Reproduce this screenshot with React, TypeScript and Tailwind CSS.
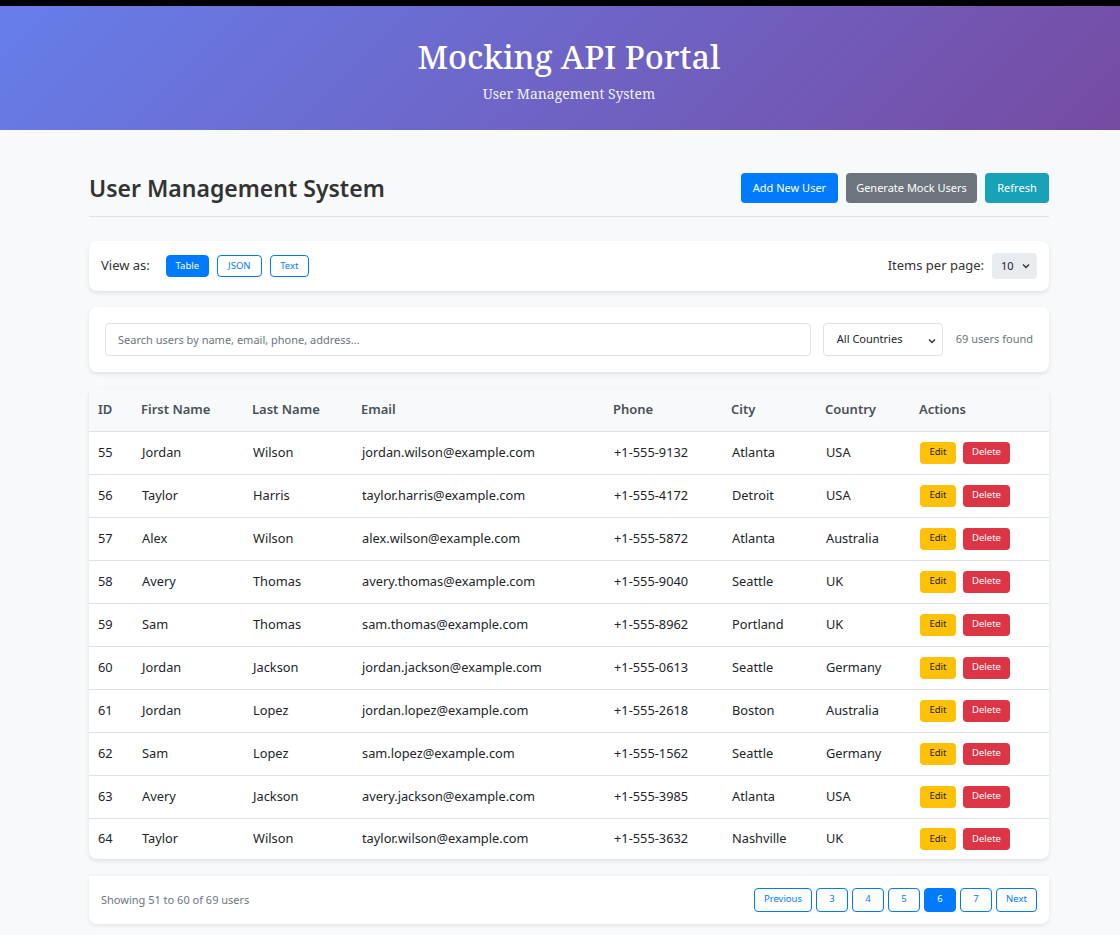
import React, { useState } from 'react';

interface User {
  id: number;
  firstName: string;
  lastName: string;
  email: string;
  phone: string;
  city: string;
  country: string;
}

const users: User[] = [
  { id: 55, firstName: 'Jordan', lastName: 'Wilson', email: 'jordan.wilson@example.com', phone: '+1-555-9132', city: 'Atlanta', country: 'USA' },
  { id: 56, firstName: 'Taylor', lastName: 'Harris', email: 'taylor.harris@example.com', phone: '+1-555-4172', city: 'Detroit', country: 'USA' },
  { id: 57, firstName: 'Alex', lastName: 'Wilson', email: 'alex.wilson@example.com', phone: '+1-555-5872', city: 'Atlanta', country: 'Australia' },
  { id: 58, firstName: 'Avery', lastName: 'Thomas', email: 'avery.thomas@example.com', phone: '+1-555-9040', city: 'Seattle', country: 'UK' },
  { id: 59, firstName: 'Sam', lastName: 'Thomas', email: 'sam.thomas@example.com', phone: '+1-555-8962', city: 'Portland', country: 'UK' },
  { id: 60, firstName: 'Jordan', lastName: 'Jackson', email: 'jordan.jackson@example.com', phone: '+1-555-0613', city: 'Seattle', country: 'Germany' },
  { id: 61, firstName: 'Jordan', lastName: 'Lopez', email: 'jordan.lopez@example.com', phone: '+1-555-2618', city: 'Boston', country: 'Australia' },
  { id: 62, firstName: 'Sam', lastName: 'Lopez', email: 'sam.lopez@example.com', phone: '+1-555-1562', city: 'Seattle', country: 'Germany' },
  { id: 63, firstName: 'Avery', lastName: 'Jackson', email: 'avery.jackson@example.com', phone: '+1-555-3985', city: 'Atlanta', country: 'USA' },
  { id: 64, firstName: 'Taylor', lastName: 'Wilson', email: 'taylor.wilson@example.com', phone: '+1-555-3632', city: 'Nashville', country: 'UK' },
];

const columns = [
  { label: 'ID', width: 'w-[43px]' },
  { label: 'First Name', width: 'w-[111px]' },
  { label: 'Last Name', width: 'w-[109px]' },
  { label: 'Email', width: 'w-[252px]' },
  { label: 'Phone', width: 'w-[118px]' },
  { label: 'City', width: 'w-[94px]' },
  { label: 'Country', width: 'w-[94px]' },
  { label: 'Actions', width: 'w-[139px]' },
];

const App: React.FC = () => {
  const [view, setView] = useState('Table');
  const pages = [3, 4, 5, 6, 7];

  return (
    <div className="min-h-[935px] bg-[#f8f9fa] font-['Noto_Sans',sans-serif] text-[#212529]">
      {/* Top strip */}
      <div className="h-[6px] bg-black" />

      {/* Header */}
      <header className="bg-[linear-gradient(135deg,#667eea_0%,#764ba2_100%)] pl-[18px] h-[124px] flex flex-col items-center text-white">
        <h1 className="mt-[30px] text-[32.5px] leading-[41px] font-['Noto_Serif','DejaVu_Serif',serif] font-medium">
          Mocking API Portal
        </h1>
        <p className="mt-[8px] text-[14px] leading-[18px] opacity-90 font-['Noto_Serif','DejaVu_Serif',serif]">
          User Management System
        </p>
      </header>

      <main className="pl-[18px]">
        <div className="mx-auto w-[960px] pt-[43px] pb-[11px]">
          {/* Title row */}
          <div className="flex items-center justify-between pb-[13px] border-b border-[#dee2e6]">
            <h2 className="text-[23px] leading-[30px] font-semibold text-[#333]">User Management System</h2>
            <div className="flex gap-2">
              <button className="h-[30px] w-[97px] rounded text-[11px] text-white bg-[#007bff]">Add New User</button>
              <button className="h-[30px] w-[131px] rounded text-[11px] text-white bg-[#6c757d]">Generate Mock Users</button>
              <button className="h-[30px] w-[64px] rounded text-[11px] text-white bg-[#17a2b8]">Refresh</button>
            </div>
          </div>

          {/* View toolbar */}
          <div className="mt-[24px] h-[50px] bg-white rounded-lg shadow-[0_2px_4px_rgba(0,0,0,0.1)] px-3 flex items-center justify-between">
            <div className="flex items-center">
              <span className="text-[13px] text-[#333] mr-[16px]">View as:</span>
              <div className="flex gap-2">
                {[
                  { v: 'Table', w: 'w-[43px]' },
                  { v: 'JSON', w: 'w-[45px]' },
                  { v: 'Text', w: 'w-[39px]' },
                ].map(({ v, w }) => (
                  <button
                    key={v}
                    onClick={() => setView(v)}
                    className={`h-[22px] ${w} rounded text-[9.5px] border ${
                      view === v
                        ? 'bg-[#007bff] border-[#007bff] text-white'
                        : 'bg-white border-[#007bff] text-[#007bff]'
                    }`}
                  >
                    {v}
                  </button>
                ))}
              </div>
            </div>
            <div className="flex items-center">
              <span className="text-[13px] text-[#333] mr-2">Items per page:</span>
              <div className="relative">
                <div className="h-[26px] w-[45px] rounded bg-[#e9ecef] text-[11px] flex items-center pl-[9px]">10</div>
                <svg className="absolute right-[7px] top-[10px]" width="8" height="6" viewBox="0 0 8 6">
                  <path d="M1 1.5 L4 4.5 L7 1.5" stroke="#333" strokeWidth="1.4" fill="none" />
                </svg>
              </div>
            </div>
          </div>

          {/* Search toolbar */}
          <div className="mt-4 h-[65px] bg-white rounded-lg shadow-[0_2px_4px_rgba(0,0,0,0.1)] px-4 flex items-center gap-3">
            <input
              className="flex-1 h-[33px] border border-[#dee2e6] rounded px-3 text-[11px] placeholder:text-[#6c757d] outline-none"
              placeholder="Search users by name, email, phone, address..."
            />
            <div className="relative w-[120px] h-[33px] border border-[#dee2e6] rounded bg-white text-[11px] flex items-center pl-[13px]">
              All Countries
              <svg className="absolute right-[6px] top-[14px]" width="8" height="6" viewBox="0 0 8 6">
                <path d="M1 1.5 L4 4.5 L7 1.5" stroke="#333" strokeWidth="1.4" fill="none" />
              </svg>
            </div>
            <span className="text-[11px] text-[#6c757d] pl-px">69 users found</span>
          </div>

          {/* Table */}
          <div className="mt-4 bg-white rounded-lg shadow-[0_2px_4px_rgba(0,0,0,0.1)] overflow-hidden">
            <table className="w-full border-collapse text-left">
              <thead>
                <tr className="bg-[#f8f9fa] h-[43px] border-b border-[#dee2e6]">
                  {columns.map((c) => (
                    <th key={c.label} className={`${c.width} pl-[9px] text-[13px] font-semibold text-[#495057]`}>
                      {c.label}
                    </th>
                  ))}
                </tr>
              </thead>
              <tbody>
                {users.map((u, i) => (
                  <tr
                    key={u.id}
                    className={`text-[12.8px] text-[#212529] ${
                      i < users.length - 1 ? 'h-[43px] border-b border-[#dee2e6]' : 'h-[41px]'
                    }`}
                  >
                    <td className="pl-[9px]">{u.id}</td>
                    <td className="pl-[10px]">{u.firstName}</td>
                    <td className="pl-[10px]">{u.lastName}</td>
                    <td className="pl-[10px]">{u.email}</td>
                    <td className="pl-[10px]">{u.phone}</td>
                    <td className="pl-[10px]">{u.city}</td>
                    <td className="pl-[10px]">{u.country}</td>
                    <td className="pl-[10px]">
                      <div className="flex gap-[7px]">
                        <button className="h-[22px] w-[36px] rounded text-[9.5px] bg-[#ffc107] text-[#212529]">Edit</button>
                        <button className="h-[22px] w-[47px] rounded text-[9.5px] bg-[#dc3545] text-white">Delete</button>
                      </div>
                    </td>
                  </tr>
                ))}
              </tbody>
            </table>
          </div>

          {/* Pagination */}
          <div className="mt-4 h-[49px] bg-white rounded-b-lg border-t border-[#f1f3f5] shadow-[0_2px_4px_rgba(0,0,0,0.08)] px-3 flex items-center justify-between">
            <span className="text-[11px] text-[#6c757d]">Showing 51 to 60 of 69 users</span>
            <div className="flex gap-1 -mt-px">
              <button className="h-[24px] w-[58px] rounded border border-[#007bff] text-[#007bff] text-[9.5px]">Previous</button>
              {pages.map((p) => (
                <button
                  key={p}
                  className={`h-[24px] w-[32px] rounded border text-[9.5px] ${
                    p === 6 ? 'bg-[#007bff] border-[#007bff] text-white' : 'bg-white border-[#007bff] text-[#007bff]'
                  }`}
                >
                  {p}
                </button>
              ))}
              <button className="h-[24px] w-[41px] rounded border border-[#007bff] text-[#007bff] text-[9.5px]">Next</button>
            </div>
          </div>
        </div>
      </main>
    </div>
  );
};

export default App;
